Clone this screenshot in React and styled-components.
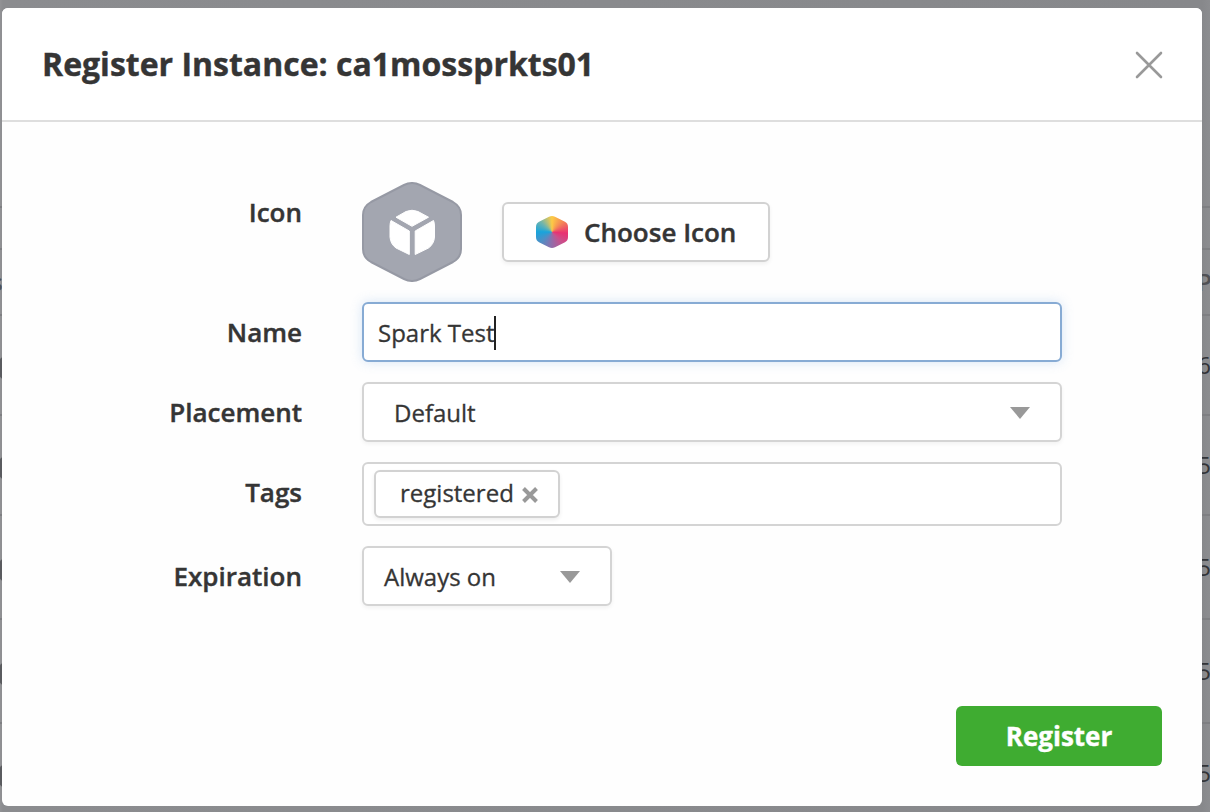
import React from "react";
import styled, { createGlobalStyle } from "styled-components";

const Global = createGlobalStyle`
  *, *::before, *::after { box-sizing: border-box; }
  html, body { margin: 0; height: 100%; overflow: hidden; }
  body { font-family: "Open Sans", sans-serif; color: #353535; background: #8b8c8f; }
  button { font-family: inherit; color: inherit; }
`;

const Page = styled.div`
  position: relative;
  width: 1210px;
  height: 812px;
  overflow: hidden;
`;

const Backdrop = styled.div`
  display: flex;
  flex-direction: column;
  height: 812px;
  background: linear-gradient(90deg, #929295 0, #8b8c8f 3px, #87888b 1202px, #8c8d90 1210px);
`;

const TableRow = styled.div`
  flex: none;
  display: flex;
  align-items: center;
  justify-content: space-between;
  height: ${(p) => p.$height}px;
  border-bottom: 2px solid #7e7f82;
  font-size: 24px;
  font-weight: ${(p) => (p.$header ? 600 : 400)};
  line-height: 30px;
  color: ${(p) => (p.$header ? "#505155" : "#333438")};
`;

const StatusDot = styled.span`
  width: 28px;
  height: 28px;
  margin: 6px 0 0 -3px;
  border-radius: 50%;
  background: #5a5b5f;
`;

const LeadingText = styled.span`
  margin-left: -9px;
`;

const CellText = styled.span`
  flex: none;
  width: 14px;
  margin-right: -1px;
  text-align: right;
`;

const Modal = styled.section`
  position: absolute;
  top: 8px;
  left: 2px;
  display: flex;
  flex-direction: column;
  width: 1200px;
  height: 798px;
  border-radius: 6px;
  background: #fefefe;
`;

const Header = styled.header`
  display: flex;
  align-items: center;
  justify-content: space-between;
  height: 114px;
  padding: 0 39px 0 40px;
  border-bottom: 2px solid #dedede;
  border-radius: 6px 6px 0 0;
  background: #fff;
`;

const Title = styled.h1`
  margin: 0;
  font-size: 32px;
  font-weight: 700;
  line-height: 44px;
  white-space: nowrap;
  -webkit-text-stroke: 0.4px currentColor;
`;

const CloseButton = styled.button`
  display: flex;
  padding: 2px 0 0;
  border: 0;
  background: none;
`;

const Form = styled.div`
  display: flex;
  flex-direction: column;
  gap: 20px;
  padding: 60px 140px 0 0;
`;

const FormRow = styled.div`
  display: grid;
  grid-template-columns: 300px 700px;
  column-gap: 60px;
  height: ${(p) => p.$height || 60}px;
`;

const Label = styled.label`
  height: 60px;
  font-size: 26px;
  font-weight: 600;
  line-height: 61px;
  text-align: right;
  -webkit-text-stroke: 0.4px currentColor;
`;

const IconPicker = styled.div`
  display: flex;
  align-items: center;
  gap: 40px;
  height: 100px;
`;

const ChooseButton = styled.button`
  display: flex;
  align-items: center;
  gap: 16px;
  width: 268px;
  height: 60px;
  padding: 0 0 0 32px;
  border: 2px solid #d2d2d2;
  border-radius: 6px;
  background: #fff;
  box-shadow: 0 2px 4px rgba(0, 0, 0, 0.06);
  font-size: 26px;
  font-weight: 600;
  white-space: nowrap;
  -webkit-text-stroke: 0.4px currentColor;
`;

const ColorWheel = styled.span`
  width: 32px;
  height: 32px;
  background: conic-gradient(#fdcb45, #f58a55 45deg, #e93172 95deg, #c9508c 135deg, #8d6fac 185deg, #4d8fc6 230deg, #18a4dc 270deg, #6cb4b0 310deg, #fdcb45);
  clip-path: path("M13 .8Q16 -.8 19 .8L29 5.7Q32 7.3 32 11V21Q32 24.7 29 26.3L19 31.2Q16 32.8 13 31.2L3 26.3Q0 24.7 0 21V11Q0 7.3 3 5.7Z");
`;

const Field = styled.div`
  display: flex;
  align-items: center;
  justify-content: ${(p) => (p.$select ? "space-between" : "flex-start")};
  width: ${(p) => p.$width || 700}px;
  height: ${(p) => p.$height || 60}px;
  padding: 0 30px 0 ${(p) => p.$left}px;
  border: 2px solid ${(p) => (p.$focused ? "#87abd4" : "#d4d4d4")};
  border-radius: 6px;
  background: #fff;
  box-shadow: ${(p) =>
    p.$focused
      ? "0 0 12px rgba(120, 170, 225, 0.3)"
      : p.$select
        ? "0 2px 4px rgba(0, 0, 0, 0.05)"
        : "none"};
  font-size: 24px;
  white-space: nowrap;
  -webkit-text-stroke: 0.3px currentColor;
`;

const Caret = styled.span`
  width: 2px;
  height: 34px;
  margin: 2px 0 0 -1px;
  background: #222;
`;

const Arrow = styled.span`
  width: 20px;
  height: 12px;
  margin-top: 2px;
  background: #999;
  clip-path: polygon(0 0, 100% 0, 50% 100%);
`;

const Tag = styled.span`
  display: flex;
  align-items: center;
  gap: 8px;
  width: 186px;
  height: 48px;
  padding: 0 0 4px 24px;
  border: 2px solid #d2d2d2;
  border-radius: 6px;
  background: #fff;
  box-shadow: 0 2px 4px rgba(0, 0, 0, 0.07);
`;

const RemoveIcon = styled.svg`
  margin-top: 6px;
`;

const Footer = styled.footer`
  display: flex;
  justify-content: flex-end;
  margin-top: auto;
  padding: 0 40px 40px 0;
`;

const RegisterButton = styled.button`
  width: 206px;
  height: 60px;
  padding: 0;
  border: 0;
  border-radius: 6px;
  background: #3fac31;
  color: #fff;
  font-size: 26px;
  font-weight: 700;
  line-height: 60px;
  -webkit-text-stroke: 0.4px currentColor;
`;

const rows = [
  { height: 208 },
  { height: 42 },
  { height: 66, lead: "s", text: "P", header: true },
  { height: 100, text: "6" },
  { height: 100, text: "5" },
  { height: 104, text: "5" },
  { height: 104, text: "5" },
  { height: 100, text: "5" },
];

function InstanceIcon() {
  return (
    <svg width="100" height="100" viewBox="0 0 100 100">
      <path
        d="M42 3Q50-1 58 3L91 20Q99 24.500 99 33V67Q99 75.500 91 80L58 97Q50 101 42 97L9 80Q1 75.500 1 67V33Q1 24.500 9 20Z"
        fill="#a3a6b0"
        stroke="#9699a4"
        strokeWidth="2"
      />
      <g fill="#fff" stroke="#fff" strokeWidth="1" strokeLinejoin="round">
        <path d="M34 35.200L44 29.500Q50 27 56 29.500L66.500 35.200L50 44.300Z" />
        <path d="M29 38.500L47.300 49V72.500L34 66Q28.500 62 28 55V44Q28 41 29 38.500Z" />
        <path d="M71.500 38.500L53.200 49V72.500L66.500 66Q72 62 72.500 55V44Q72.500 41 71.500 38.500Z" />
      </g>
    </svg>
  );
}

export default function App() {
  return (
    <Page>
      <Global />
      <Backdrop>
        {rows.map((row, i) => (
          <TableRow key={i} $height={row.height} $header={row.header}>
            {row.lead && <LeadingText>{row.lead}</LeadingText>}
            {row.text && !row.header && <StatusDot />}
            {row.text && <CellText>{row.text}</CellText>}
          </TableRow>
        ))}
      </Backdrop>
      <Modal>
        <Header>
          <Title>Register Instance: ca1mossprkts01</Title>
          <CloseButton aria-label="Close">
            <svg width="28" height="28" viewBox="0 0 28 28" stroke="#999" strokeWidth="2.600" strokeLinecap="round">
              <path d="M2 2L26 26M26 2L2 26" />
            </svg>
          </CloseButton>
        </Header>
        <Form>
          <FormRow $height={100}>
            <Label>Icon</Label>
            <IconPicker>
              <InstanceIcon />
              <ChooseButton>
                <ColorWheel />
                Choose Icon
              </ChooseButton>
            </IconPicker>
          </FormRow>
          <FormRow>
            <Label>Name</Label>
            <Field $focused $left={14}>
              Spark Test
              <Caret />
            </Field>
          </FormRow>
          <FormRow>
            <Label>Placement</Label>
            <Field $select $left={30}>
              Default
              <Arrow />
            </Field>
          </FormRow>
          <FormRow $height={64}>
            <Label>Tags</Label>
            <Field $height={64} $left={10}>
              <Tag>
                registered
                <RemoveIcon width="16" height="16" viewBox="0 0 16 16" stroke="#999" strokeWidth="4">
                  <path d="M1.500 1.500L14.500 14.500M14.500 1.500L1.500 14.500" />
                </RemoveIcon>
              </Tag>
            </Field>
          </FormRow>
          <FormRow>
            <Label>Expiration</Label>
            <Field $select $width={250} $left={20}>
              Always on
              <Arrow />
            </Field>
          </FormRow>
        </Form>
        <Footer>
          <RegisterButton>Register</RegisterButton>
        </Footer>
      </Modal>
    </Page>
  );
}
